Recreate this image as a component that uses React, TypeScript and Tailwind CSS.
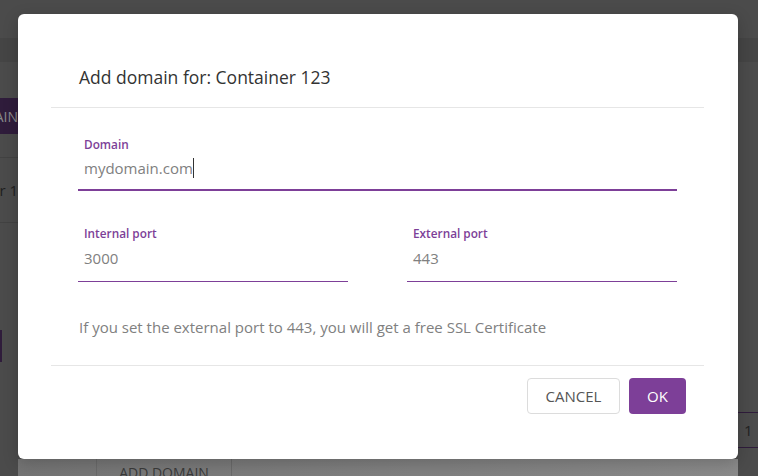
const font = { fontFamily: '"Open Sans", "Noto Sans", sans-serif' };

function Field({
  label,
  value,
  focused = false,
  className = "",
}: {
  label: string;
  value: string;
  focused?: boolean;
  className?: string;
}) {
  return (
    <div className={className}>
      <div className="px-[6px] text-[11.8px] leading-[16px] font-semibold text-[#7d3f98]">
        {label}
      </div>
      <div
        className={
          "flex items-center px-[6px] text-[15px] leading-[22px] text-[#808080] border-[#7d3f98] " +
          (focused ? "mt-[5px] pb-[10px] border-b-2" : "mt-[6px] pb-[12px] border-b")
        }
      >
        <span>{value}</span>
        {focused && <span className="w-px h-[20px] bg-[#333]" />}
      </div>
    </div>
  );
}

export default function App() {
  return (
    <div className="relative w-[758px] h-[476px] overflow-hidden bg-[#4b4b4b]" style={font}>
      {/* page underneath the overlay */}
      <div className="flex flex-col h-full">
        <div className="h-[38px] shrink-0 bg-[#4b4b4b]" />
        <div className="h-[24px] shrink-0 bg-[#454545]" />
        <div className="flex flex-1">
          <div className="w-[18px] shrink-0 overflow-hidden flex flex-col">
            <div className="mt-[36px] h-[36px] flex justify-end items-center bg-[#2f1c3b] text-[14px] text-[#8a8a8a] whitespace-nowrap">
              ADD DOMAIN
            </div>
            <div className="mt-[23px] border-t border-[#424242]" />
            <div className="h-[64px] flex justify-end items-center text-[15px] text-[#1f1f1f] whitespace-nowrap">
              Container 1
            </div>
            <div className="border-t border-[#424242]" />
            <div className="mt-[107px] h-[32px] border-l-2 border-[#2f1c3b]" />
          </div>
          <div className="w-[720px] shrink-0 flex flex-col justify-end">
            <div className="h-[17px] bg-gradient-to-r from-[#747474] to-[#8a8a8a] flex">
              <div className="ml-[78px] w-[136px] border-x border-[#6a6a6a] text-center text-[14px] leading-[28px] text-[#3a3a3a]">
                ADD DOMAIN
              </div>
            </div>
          </div>
          <div className="w-[20px] shrink-0 flex flex-col">
            <div className="mt-[350px] h-[36px] border-y border-[#2f1c3b] flex items-center pl-[6px] text-[15px] text-[#222]">
              1
            </div>
          </div>
        </div>
      </div>

      {/* dialog */}
      <div className="absolute left-[18px] top-[14px] w-[720px] h-[445px] bg-white rounded-[6px] pl-[33px] pr-[34px] flex flex-col shadow-[0_4px_16px_rgba(0,0,0,0.2)]">
        <div className="pt-[51px] pb-[18px] px-[28px] border-b border-[#e6e6e6] text-[17.5px] leading-[24px] text-[#333]">
          Add domain for: Container 123
        </div>
        <div className="px-[27px] pt-[28px]">
          <Field label="Domain" value="mydomain.com" focused />
          <div className="mt-[34px] flex justify-between">
            <Field label="Internal port" value="3000" className="w-[270px]" />
            <Field label="External port" value="443" className="w-[270px]" />
          </div>
          <p className="mt-[35px] pl-px text-[15px] leading-[20px] text-[#808080]">
            If you set the external port to 443, you will get a free SSL Certificate
          </p>
        </div>
        <div className="mt-[28px] border-t border-[#e6e6e6] pt-[12px] pr-[18px] flex justify-end gap-[9px]">
          <button className="w-[93px] h-[36px] rounded-[4px] border border-[#dcdcdc] bg-white text-[15px] text-[#555]">
            CANCEL
          </button>
          <button className="w-[57px] h-[36px] rounded-[4px] bg-[#7d3f98] text-[15px] text-white">
            OK
          </button>
        </div>
      </div>
    </div>
  );
}
